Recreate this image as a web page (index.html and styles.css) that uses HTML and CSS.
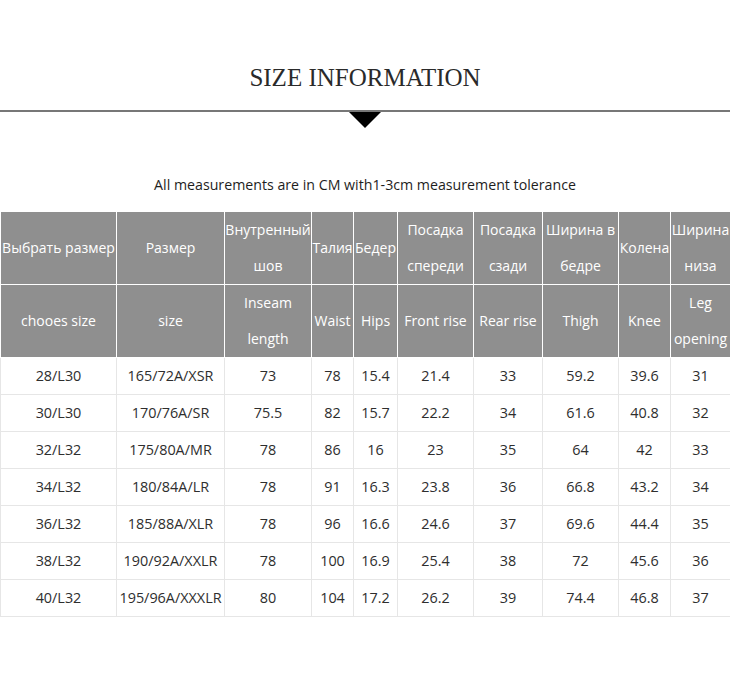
FILE: index.html
```html
<!DOCTYPE html>
<html>
<head>
<meta charset="utf-8">
<link rel="stylesheet" href="styles.css">
</head>
<body>
<div class="page">
  <h1 class="title">SIZE INFORMATION</h1>
  <div class="rule"></div>
  <p class="note">All measurements are in CM with1-3cm measurement tolerance</p>
  <table class="chart">
    <colgroup>
      <col class="c1"><col class="c2"><col class="c3"><col class="c4"><col class="c5">
      <col class="c6"><col class="c7"><col class="c8"><col class="c9"><col class="c10">
    </colgroup>
    <thead>
      <tr class="hrow">
        <th>Выбрать размер</th><th>Размер</th><th>Внутренный шов</th><th>Талия</th><th>Бедер</th>
        <th>Посадка спереди</th><th>Посадка сзади</th><th>Ширина в бедре</th><th>Колена</th><th>Ширина низа</th>
      </tr>
      <tr class="hrow">
        <th>chooes size</th><th>size</th><th>Inseam length</th><th>Waist</th><th>Hips</th>
        <th>Front rise</th><th>Rear rise</th><th>Thigh</th><th>Knee</th><th>Leg opening</th>
      </tr>
    </thead>
    <tbody>
      <tr><td>28/L30</td><td>165/72A/XSR</td><td>73</td><td>78</td><td>15.4</td><td>21.4</td><td>33</td><td>59.2</td><td>39.6</td><td>31</td></tr>
      <tr><td>30/L30</td><td>170/76A/SR</td><td>75.5</td><td>82</td><td>15.7</td><td>22.2</td><td>34</td><td>61.6</td><td>40.8</td><td>32</td></tr>
      <tr><td>32/L32</td><td>175/80A/MR</td><td>78</td><td>86</td><td>16</td><td>23</td><td>35</td><td>64</td><td>42</td><td>33</td></tr>
      <tr><td>34/L32</td><td>180/84A/LR</td><td>78</td><td>91</td><td>16.3</td><td>23.8</td><td>36</td><td>66.8</td><td>43.2</td><td>34</td></tr>
      <tr><td>36/L32</td><td>185/88A/XLR</td><td>78</td><td>96</td><td>16.6</td><td>24.6</td><td>37</td><td>69.6</td><td>44.4</td><td>35</td></tr>
      <tr><td>38/L32</td><td>190/92A/XXLR</td><td>78</td><td>100</td><td>16.9</td><td>25.4</td><td>38</td><td>72</td><td>45.6</td><td>36</td></tr>
      <tr><td>40/L32</td><td>195/96A/XXXLR</td><td>80</td><td>104</td><td>17.2</td><td>26.2</td><td>39</td><td>74.4</td><td>46.8</td><td>37</td></tr>
    </tbody>
  </table>
</div>
</body>
</html>
```
FILE: styles.css
```css
html, body {
  margin: 0;
  padding: 0;
  background: #fff;
}
.page {
  width: 730px;
  font-family: "Open Sans", "Noto Sans", sans-serif;
}
.title {
  margin: 0;
  padding-top: 63px;
  font-family: "Liberation Serif", serif;
  font-weight: normal;
  font-size: 25px;
  line-height: 30px;
  color: #2a2a2a;
  text-align: center;
}
.rule {
  position: relative;
  margin-top: 17px;
  height: 2px;
  background: #777;
}
.rule::after {
  content: "";
  position: absolute;
  left: 349px;
  top: 2px;
  width: 0;
  height: 0;
  border-left: 16.5px solid transparent;
  border-right: 16.5px solid transparent;
  border-top: 16px solid #000;
}
.note {
  margin: 63px 0 0;
  font-size: 14.2px;
  line-height: 20px;
  color: #1e1e1e;
  text-align: center;
}
.chart {
  margin-top: 16px;
  width: 730px;
  table-layout: fixed;
  border-collapse: collapse;
  font-size: 14px;
}
.c1 { width: 116px; }
.c2 { width: 108px; }
.c3 { width: 87px; }
.c4 { width: 42px; }
.c5 { width: 44px; }
.c6 { width: 76px; }
.c7 { width: 69px; }
.c8 { width: 76px; }
.c9 { width: 52px; }
.c10 { width: 60px; }
.chart th {
  background: #8f8f8f;
  color: #fff;
  font-weight: normal;
  line-height: 36px;
  height: 72px;
  padding: 0;
  border: 1px solid #fff;
  text-align: center;
  vertical-align: middle;
  white-space: normal;
}
.chart td {
  height: 36px;
  line-height: 36px;
  padding: 0;
  border: 1px solid #e6e6e6;
  text-align: center;
  font-size: 14.4px;
  color: #2e2e2e;
  white-space: nowrap;
}
```
